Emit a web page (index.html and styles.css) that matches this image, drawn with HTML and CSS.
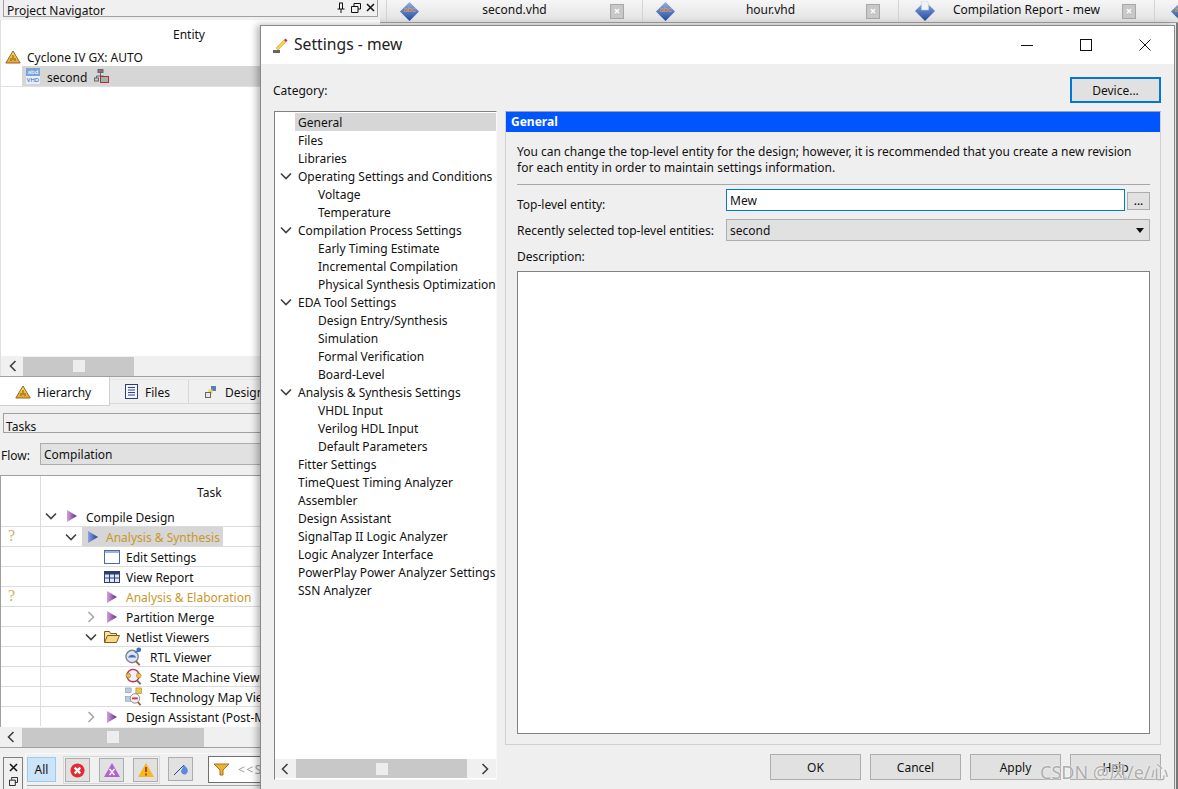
FILE: index.html
```html
<!DOCTYPE html>
<html lang="en">
<head>
    <meta charset="UTF-8">
    <title>Settings - mew</title>
    <link rel="stylesheet" href="styles.css">
</head>
<body>
    <svg class="defs" width="0" height="0">
        <defs>
            <linearGradient id="purple" x1="0" y1="0" x2="1" y2="0"><stop offset="0" stop-color="#d8a0e0"/><stop offset="1" stop-color="#5a2a88"/></linearGradient>
            <linearGradient id="blue" x1="0" y1="0" x2="1" y2="0"><stop offset="0" stop-color="#8aa4e4"/><stop offset="1" stop-color="#27378f"/></linearGradient>
            <linearGradient id="gem" x1="0" y1="0" x2="0" y2="1"><stop offset="0" stop-color="#8fb0ea"/><stop offset="1" stop-color="#24499c"/></linearGradient>
            <linearGradient id="amber" x1="0" y1="0" x2="0" y2="1"><stop offset="0" stop-color="#ffe070"/><stop offset="1" stop-color="#eea020"/></linearGradient>
            <symbol id="warn" viewBox="0 0 16 14"><path d="M8 1 L15.200 13 H.8 Z" fill="url(#amber)" stroke="#8a6a30"/><path d="M8 5v5M6 8v3M10 8v3" stroke="#7a5a10"/></symbol>
            <symbol id="play-purple" viewBox="0 0 12 12"><path d="M1 0 L11 6 L1 12 Z" fill="url(#purple)"/></symbol>
            <symbol id="play-blue" viewBox="0 0 12 12"><path d="M1 0 L11 6 L1 12 Z" fill="url(#blue)"/></symbol>
            <symbol id="gem-abc" viewBox="0 0 20 20"><path d="M10 0 L20 10 L10 20 L0 10 Z" fill="url(#gem)"/><text x="10" y="11" font-size="8" text-anchor="middle" fill="#e8a030" font-family="Liberation Sans">abc</text></symbol>
            <symbol id="gem-doc" viewBox="0 0 22 22"><path d="M11 0 L22 11 L11 22 L0 11 Z" fill="url(#gem)"/><path d="M7 0h6l2 3v7H7Z" fill="#eef2fa" stroke="#b8c4dc" stroke-width=".5"/></symbol>
            <symbol id="down" viewBox="0 0 12 8"><path d="M1 1.500 L6 6.500 L11 1.500" fill="none" stroke="#404040" stroke-width="1.600"/></symbol>
            <symbol id="right" viewBox="0 0 8 12"><path d="M1.500 1 L6.500 6 L1.500 11" fill="none" stroke="#a8a8a8" stroke-width="1.600"/></symbol>
            <symbol id="left" viewBox="0 0 8 12"><path d="M6.500 1 L1.500 6 L6.500 11" fill="none" stroke="#404040" stroke-width="1.600"/></symbol>
        </defs>
    </svg>

    <div class="app">
        <aside class="left">
            <div class="dock-title">
                <span>Project Navigator</span>
                <span class="dock-btns">
                    <svg width="10" height="12" viewBox="0 0 10 12"><path d="M3 1h4M3.500 1v6M6.500 1v6M1.500 7h7M5 7v4" fill="none" stroke="#111"/></svg>
                    <svg width="10" height="10" viewBox="0 0 10 10"><path d="M3 3V.5h6.500V6H7M.5 3.500H7V9.500H.5Z" fill="none" stroke="#111"/></svg>
                    <svg width="9" height="9" viewBox="0 0 9 9"><path d="M1 1l7 7M8 1L1 8" stroke="#111" stroke-width="1.500"/></svg>
                </span>
            </div>
            <div class="nav-panel">
                <div class="nav-head">Entity</div>
                <div class="nav-device"><svg class="ico16"><use href="#warn"/></svg><span>Cyclone IV GX: AUTO</span></div>
                <div class="nav-second">
                    <span class="abc"><b>abd</b><b>VHD</b></span>
                    <span class="second-name">second</span>
                    <svg width="15" height="14" viewBox="0 0 15 14"><rect x="4" y="0.500" width="5" height="3" fill="#8a6a90" stroke="#666"/><path d="M6.500 4v3M2.500 9V7h7" fill="none" stroke="#666"/><rect x="0.500" y="9" width="4" height="3" fill="#ccc" stroke="#666"/><rect x="6.500" y="7.500" width="8" height="6" fill="#8fbf9f" stroke="#c02050"/></svg>
                </div>
                <div class="grow"></div>
                <div class="hscroll">
                    <svg class="arrow" width="8" height="12"><use href="#left"/></svg>
                    <div class="htrack nav-track"><i></i></div>
                </div>
            </div>
            <div class="nav-tabs">
                <div class="tab-active"><svg class="ico16"><use href="#warn"/></svg>Hierarchy</div>
                <div class="tab"><svg width="13" height="15" viewBox="0 0 13 15"><rect x="0.500" y="0.500" width="12" height="14" fill="#f4f6fb" stroke="#2c3f7c"/><path d="M3 3.500h7M3 6h7M3 8.500h7M3 11h7" stroke="#2c3f9c"/></svg><span class="tab-text">Files</span></div>
                <div class="tab tab-design"><svg width="12" height="12" viewBox="0 0 12 12"><rect x="6" y="0" width="5" height="5" fill="#5a7fb0"/><rect x="3.500" y="3.500" width="4" height="4" fill="#f0d050"/><rect x="0.500" y="6.500" width="5" height="5" fill="#e8e8e8" stroke="#666"/></svg><span class="tab-text">Design</span></div>
            </div>
            <div class="tasks-title">Tasks</div>
            <div class="flow-row">
                <span class="flow-label">Flow:</span>
                <div class="flow-select">Compilation</div>
            </div>
            <div class="task-table">
                <div class="task-head"><div class="col-a"></div><div class="col-b">Task</div></div>
                <div class="task-row no-line">
                    <div class="col-a"></div>
                    <div class="col-b lv1"><svg class="chev"><use href="#down"/></svg><svg class="play"><use href="#play-purple"/></svg><span class="cell">Compile Design</span></div>
                </div>
                <div class="task-row">
                    <div class="col-a q">?</div>
                    <div class="col-b lv2"><svg class="chev"><use href="#down"/></svg><span class="sel"><svg class="play"><use href="#play-blue"/></svg><span class="amber cell">Analysis &amp; Synthesis</span></span></div>
                </div>
                <div class="task-row">
                    <div class="col-a"></div>
                    <div class="col-b lv3"><svg width="16" height="14" viewBox="0 0 16 14"><rect x="0.500" y="0.500" width="15" height="13" fill="#fff" stroke="#4a6aa8"/><rect x="1" y="1" width="14" height="2" fill="#9ab4dc"/></svg><span class="cell">Edit Settings</span></div>
                </div>
                <div class="task-row">
                    <div class="col-a"></div>
                    <div class="col-b lv3"><svg width="16" height="12" viewBox="0 0 16 12"><rect x="0.500" y="0.500" width="15" height="11" fill="#dfe6f2" stroke="#2c3f6c"/><rect x="0" y="0" width="16" height="3.500" fill="#2c3f6c"/><path d="M0 7h16M5.500 3v9M10.500 3v9" stroke="#2c3f6c"/></svg><span class="cell">View Report</span></div>
                </div>
                <div class="task-row">
                    <div class="col-a q">?</div>
                    <div class="col-b lv3b"><svg class="play"><use href="#play-purple"/></svg><span class="amber cell">Analysis &amp; Elaboration</span></div>
                </div>
                <div class="task-row">
                    <div class="col-a"></div>
                    <div class="col-b lv2b"><svg class="chev-r"><use href="#right"/></svg><svg class="play"><use href="#play-purple"/></svg><span class="cell">Partition Merge</span></div>
                </div>
                <div class="task-row">
                    <div class="col-a"></div>
                    <div class="col-b lv2c"><svg class="chev"><use href="#down"/></svg><svg width="16" height="13" viewBox="0 0 16 13"><path d="M.5 12.500V1.500h5l1 2h6v2" fill="#f5e4a8" stroke="#7a5a20"/><path d="M.5 12.500l3-7h12l-3 7Z" fill="#f9d880" stroke="#7a5a20"/></svg><span class="cell">Netlist Viewers</span></div>
                </div>
                <div class="task-row">
                    <div class="col-a"></div>
                    <div class="col-b lv4"><svg class="ico20" viewBox="0 0 20 20"><circle cx="8" cy="10" r="6.500" fill="#dfe6f2" stroke="#7a8494" stroke-width="1.500"/><path d="M3.500 11a5 5 0 0 1 9 0Z" fill="#3f6fc0"/><circle cx="15" cy="3" r="2.500" fill="#3f6fc0"/><path d="M11 6l3-2" stroke="#3f6fc0" stroke-width="1.500"/><path d="M12 15l4 4" stroke="#8a6a40" stroke-width="2"/></svg><span class="cell">RTL Viewer</span></div>
                </div>
                <div class="task-row">
                    <div class="col-a"></div>
                    <div class="col-b lv4"><svg class="ico20" viewBox="0 0 20 20"><circle cx="9" cy="9" r="6.500" fill="#eef1f6" stroke="#c83048" stroke-width="1.500"/><circle cx="4" cy="9" r="2.500" fill="#e8c040" stroke="#806020" stroke-width=".5"/><circle cx="15" cy="9" r="2.500" fill="#e8c040" stroke="#806020" stroke-width=".5"/><path d="M13 14l4 4" stroke="#6a6a70" stroke-width="2"/></svg><span class="cell">State Machine Viewer</span></div>
                </div>
                <div class="task-row">
                    <div class="col-a"></div>
                    <div class="col-b lv4"><svg class="ico20" viewBox="0 0 20 20"><rect x="1" y="1" width="6" height="5" fill="#b8cce8" stroke="#7a8494" stroke-width=".5"/><rect x="12" y="1" width="6" height="6" fill="#f0c840" stroke="#8a6a20" stroke-width=".5"/><rect x="1" y="10" width="6" height="5" fill="#b8cce8" stroke="#7a8494" stroke-width=".5"/><circle cx="11" cy="12" r="5" fill="#f4f4f6" stroke="#8a8a90"/><path d="M8 12h6" stroke="#d03040" stroke-width="2"/><path d="M14 16l3 3" stroke="#8a6a40" stroke-width="2"/></svg><span class="cell">Technology Map Viewer</span></div>
                </div>
                <div class="task-row">
                    <div class="col-a"></div>
                    <div class="col-b lv2b"><svg class="chev-r"><use href="#right"/></svg><svg class="play"><use href="#play-purple"/></svg><span class="cell">Design Assistant (Post-Map)</span></div>
                </div>
            </div>
            <div class="hscroll task-scroll">
                <svg class="arrow" width="8" height="12"><use href="#left"/></svg>
                <div class="htrack task-track"><i></i></div>
            </div>
            <div class="msg-bar">
                <div class="msg-close">
                    <svg width="9" height="9" viewBox="0 0 9 9"><path d="M1 1l7 7M8 1L1 8" stroke="#111" stroke-width="1.500"/></svg>
                    <svg width="9" height="9" viewBox="0 0 10 10"><path d="M3 3V.5h6.500V6H7M.5 3.500H7V9.500H.5Z" fill="none" stroke="#111"/></svg>
                </div>
                <div class="msg-panel">
                    <div class="msg-tools">
                        <div class="all-btn">All</div>
                        <div class="tool-group">
                            <div class="tool"><svg width="15" height="15" viewBox="0 0 16 16"><circle cx="8" cy="8" r="7.500" fill="#e82830"/><path d="M5 5l6 6M11 5l-6 6" stroke="#fff" stroke-width="2.500"/></svg></div>
                            <div class="tool"><svg width="16" height="14" viewBox="0 0 16 14"><path d="M8 0 L16 14 H0 Z" fill="#b060d0"/><path d="M5.500 6l5 6M10.500 6l-5 6" stroke="#fff" stroke-width="1.500"/></svg></div>
                            <div class="tool"><svg width="16" height="14" viewBox="0 0 16 14"><path d="M8 0 L16 14 H0 Z" fill="#f5b820"/><path d="M8 4v5M8 10.500v2" stroke="#a02020" stroke-width="1.500"/></svg></div>
                        </div>
                        <div class="tool"><svg width="16" height="14" viewBox="0 0 16 14"><path d="M1 13L11 3" stroke="#304870"/><path d="M11 3c3 3 5 5 3 8s-6 1-6-2z" fill="#5a8ae0"/></svg></div>
                        <div class="filter">
                            <svg width="15" height="13" viewBox="0 0 15 13"><path d="M0 1h15L9 7v5H6V7Z" fill="#f0b030" stroke="#a87020"/></svg>
                            <span>&lt;&lt;Search&gt;&gt;</span>
                        </div>
                    </div>
                </div>
            </div>
        </aside>
        <main class="right">
            <div class="doc-tabs">
                <div class="doc-gap"></div>
                <div class="doc-tab"><svg class="gem"><use href="#gem-abc"/></svg><span>second.vhd</span><i class="tab-x">×</i></div>
                <div class="doc-tab"><svg class="gem"><use href="#gem-abc"/></svg><span>hour.vhd</span><i class="tab-x">×</i></div>
                <div class="doc-tab doc-report"><svg class="gem-big"><use href="#gem-doc"/></svg><span>Compilation Report - mew</span><i class="tab-x">×</i></div>
                <div class="doc-last"><svg class="gem"><use href="#gem-abc"/></svg></div>
            </div>
            <div class="doc-edge"></div>
        </main>
    </div>

    <div class="dialog">
        <header class="dlg-title">
            <svg width="16" height="17" viewBox="0 0 16 17"><path d="M4 11L12 3l2 2-8 8z" fill="#f5d040" stroke="#c89a30" stroke-width=".5"/><path d="M12 3l1.500-1.500 2 2L14 5z" fill="#d02060"/><rect x="1" y="13" width="7" height="3" fill="#666"/></svg>
            <span class="dlg-name">Settings - mew</span>
            <div class="win-btns">
                <svg width="12" height="12" viewBox="0 0 12 12"><path d="M0 6.500h12" stroke="#111"/></svg>
                <svg width="12" height="12" viewBox="0 0 12 12"><rect x="0.500" y="0.500" width="11" height="11" fill="none" stroke="#111"/></svg>
                <svg width="12" height="12" viewBox="0 0 12 12"><path d="M.5.500l11 11M11.500.500l-11 11" stroke="#111"/></svg>
            </div>
        </header>
        <div class="dlg-body">
            <div class="cat-row">
                <span class="cat-label">Category:</span>
                <button class="btn btn-device">Device...</button>
            </div>
            <div class="dlg-main">
                <div class="tree">
                    <div class="tree-list">
                        <div class="t t0 sel-row">General</div>
                        <div class="t t0">Files</div>
                        <div class="t t0">Libraries</div>
                        <div class="t t0"><svg class="tree-chev"><use href="#down"/></svg>Operating Settings and Conditions</div>
                        <div class="t t1">Voltage</div>
                        <div class="t t1">Temperature</div>
                        <div class="t t0"><svg class="tree-chev"><use href="#down"/></svg>Compilation Process Settings</div>
                        <div class="t t1">Early Timing Estimate</div>
                        <div class="t t1">Incremental Compilation</div>
                        <div class="t t1">Physical Synthesis Optimization</div>
                        <div class="t t0"><svg class="tree-chev"><use href="#down"/></svg>EDA Tool Settings</div>
                        <div class="t t1">Design Entry/Synthesis</div>
                        <div class="t t1">Simulation</div>
                        <div class="t t1">Formal Verification</div>
                        <div class="t t1">Board-Level</div>
                        <div class="t t0"><svg class="tree-chev"><use href="#down"/></svg>Analysis &amp; Synthesis Settings</div>
                        <div class="t t1">VHDL Input</div>
                        <div class="t t1">Verilog HDL Input</div>
                        <div class="t t1">Default Parameters</div>
                        <div class="t t0">Fitter Settings</div>
                        <div class="t t0">TimeQuest Timing Analyzer</div>
                        <div class="t t0">Assembler</div>
                        <div class="t t0">Design Assistant</div>
                        <div class="t t0">SignalTap II Logic Analyzer</div>
                        <div class="t t0">Logic Analyzer Interface</div>
                        <div class="t t0">PowerPlay Power Analyzer Settings</div>
                        <div class="t t0">SSN Analyzer</div>
                    </div>
                    <div class="tree-scroll">
                        <svg class="arrow" width="8" height="12"><use href="#left"/></svg>
                        <div class="htrack tree-track"><i></i></div>
                        <svg class="arrow" width="8" height="12"><path d="M1.500 1L6.500 6L1.500 11" fill="none" stroke="#404040" stroke-width="1.600"/></svg>
                    </div>
                </div>
                <div class="page-col">
                    <section class="page">
                        <h2 class="page-title">General</h2>
                        <div class="page-body">
                            <p class="intro">You can change the top-level entity for the design; however, it is recommended that you create a new revision for each entity in order to maintain settings information.</p>
                            <div class="form-row top-row">
                                <label>Top-level entity:</label>
                                <div class="input-wrap">
                                    <div class="input">Mew</div>
                                    <button class="dots">...</button>
                                </div>
                            </div>
                            <div class="form-row">
                                <label>Recently selected top-level entities:</label>
                                <div class="combo"><span>second</span><svg width="8" height="5" viewBox="0 0 8 5"><path d="M0 0h8L4 5z" fill="#111"/></svg></div>
                            </div>
                            <div class="desc-label">Description:</div>
                            <div class="desc-box"></div>
                        </div>
                    </section>
                    <footer class="dlg-foot">
                        <button class="btn">OK</button>
                        <button class="btn">Cancel</button>
                        <button class="btn">Apply</button>
                        <button class="btn">Help</button>
                    </footer>
                </div>
            </div>
        </div>
        <span class="watermark">CSDN @风/e/心</span>
    </div>
</body>
</html>
```

FILE: styles.css
```css
* {
    box-sizing: border-box;
}
html, body {
    margin: 0;
    padding: 0;
    height: 789px;
    overflow: hidden;
    background: #f0f0f0;
    font-family: "Noto Sans", "Noto Sans CJK SC", sans-serif;
    font-size: 12px;
    color: #111;
}
.defs {
    position: absolute;
}
.app {
    display: flex;
    height: 789px;
}

/* left docks */
.left {
    width: 380px;
    flex: none;
    display: flex;
    flex-direction: column;
    overflow: hidden;
}
.dock-title {
    height: 17px;
    width: 375px;
    margin-left: 3px;
    border: 1px solid #a0a0a0;
    border-top: none;
    display: flex;
    justify-content: space-between;
    align-items: center;
    padding: 6px 0 0 3px;
    line-height: 16px;
}
.dock-btns {
    display: flex;
    gap: 5px;
    align-items: center;
    padding-right: 2px;
    margin-top: -7px;
}
.nav-panel {
    height: 356px;
    margin-top: 3px;
    background: #fff;
    display: flex;
    flex-direction: column;
    border-left: 1px solid #e0e0e0;
}
.nav-head {
    height: 26px;
    line-height: 30px;
    padding-left: 172px;
}
.nav-device {
    height: 20px;
    display: flex;
    align-items: center;
    gap: 6px;
    padding: 2px 0 0 4px;
}
.ico16 {
    width: 16px;
    height: 14px;
}
.nav-second {
    height: 21px;
    background: #d6d6d6;
    display: flex;
    align-items: center;
    border-bottom: 1px solid #e0e0e0;
    padding-left: 25px;
    gap: 7px;
    position: relative;
}
.nav-second::before {
    content: '';
    position: absolute;
    left: 0;
    top: 0;
    bottom: 0;
    width: 21px;
    background: #fff;
}
.abc {
    width: 14px;
    height: 16px;
    display: flex;
    flex-direction: column;
    position: relative;
    font-size: 6px;
    line-height: 8px;
    text-align: center;
    overflow: hidden;
}
.abc b {
    display: block;
    height: 8px;
    font-weight: normal;
}
.abc b:first-child {
    background: #7da4d6;
    color: #fff;
}
.abc b:last-child {
    background: #e8eef8;
    color: #2c5fb0;
}
.second-name {
    padding-top: 3px;
}
.grow {
    flex: 1;
}
.hscroll {
    height: 20px;
    flex: none;
    display: flex;
    align-items: center;
    padding-left: 8px;
    background: #f0f0f0;
    gap: 6px;
}
.arrow {
    flex: none;
}
.htrack {
    height: 19px;
    background: #c8c8c8;
    display: flex;
    align-items: center;
    justify-content: center;
}
.htrack i {
    width: 12px;
    height: 12px;
    background: #ededed;
}
.nav-track {
    width: 111px;
}
.nav-tabs {
    height: 30px;
    flex: none;
    display: flex;
    align-items: flex-start;
    border-top: 1px solid #a0a0a0;
}
.tab-active, .tab {
    display: flex;
    align-items: center;
}
.tab-active {
    width: 110px;
    height: 29px;
    padding: 2px 0 0 15px;
    gap: 6px;
    background: #fff;
    border-bottom: 1px solid #d0d0d0;
    border-right: 1px solid #d0d0d0;
}
.tab {
    height: 25px;
    margin-top: 2px;
    padding-left: 15px;
    width: 79px;
    border-right: 1px solid #d8d8d8;
    border-bottom: 1px solid #d8d8d8;
    border-top: 1px solid #e4e4e4;
    gap: 7px;
}
.tab-text {
    padding-top: 2px;
}
.tab-design {
    padding-left: 16px;
    gap: 8px;
    width: 120px;
}
.tasks-title {
    height: 20px;
    flex: none;
    margin: 7px 0 0 3px;
    border: 1px solid #a0a0a0;
    border-right: none;
    padding: 6px 0 0 2px;
    line-height: 14px;
}
.flow-row {
    display: flex;
    align-items: center;
    height: 22px;
    flex: none;
    margin-top: 10px;
}
.flow-label {
    width: 40px;
    padding: 2px 0 0 1px;
}
.flow-select {
    width: 300px;
    height: 22px;
    background: #e1e1e1;
    border: 1px solid #adadad;
    line-height: 22px;
    padding-left: 3px;
}
.task-table {
    margin-top: 10px;
    border-top: 1px solid #a0a0a0;
    border-left: 1px solid #a0a0a0;
    background: #fff;
    height: 252px;
    flex: none;
    overflow: hidden;
}
.task-head {
    display: flex;
    height: 30px;
}
.task-head .col-b {
    padding: 8px 0 0 156px;
    line-height: 17px;
    align-items: flex-start;
}
.task-row {
    display: flex;
    height: 20px;
    border-top: 1px solid #dcdcdc;
    white-space: nowrap;
}
.task-row.no-line {
    border-top: none;
}
.col-a {
    width: 40px;
    flex: none;
    border-right: 1px solid #dcdcdc;
}
.col-b {
    flex: 1;
    display: flex;
    align-items: center;
    gap: 6px;
}
.cell {
    padding-top: 2px;
}
.q {
    color: #d0b060;
    font-size: 16px;
    font-family: "Liberation Serif", serif;
    padding-left: 7px;
    line-height: 18px;
}
.chev {
    width: 12px;
    height: 8px;
    flex: none;
}
.chev-r {
    width: 8px;
    height: 12px;
    flex: none;
}
.play {
    width: 12px;
    height: 12px;
    flex: none;
}
.lv1 { padding-left: 4px; gap: 8.5px; }
.lv2 { padding-left: 24px; gap: 5px; }
.lv2b { padding-left: 46px; gap: 8px; }
.lv2b .chev-r { margin-right: 3px; }
.lv2c { padding-left: 44px; gap: 6px; }
.lv2c .chev { margin-right: 1px; }
.lv3 { padding-left: 63px; gap: 6px; }
.lv3b { padding-left: 65px; gap: 8px; }
.lv4 { padding-left: 83px; gap: 6px; }
.ico20 {
    width: 20px;
    height: 19px;
    flex: none;
}
.sel {
    display: flex;
    align-items: center;
    gap: 7px;
    background: #d6d6d6;
    height: 19px;
    padding: 0 3px 0 5px;
}
.amber {
    color: #c9982a;
}
.task-scroll {
    padding-left: 7px;
    gap: 7px;
}
.task-track {
    width: 182px;
}
.msg-bar {
    height: 41px;
    flex: none;
    display: flex;
    border-top: 1px solid #a0a0a0;
    padding-left: 3px;
    gap: 2px;
}
.msg-close {
    width: 20px;
    height: 40px;
    margin-top: 9px;
    border: 1px solid #808080;
    display: flex;
    flex-direction: column;
    align-items: center;
    gap: 5px;
    padding-top: 5px;
    flex: none;
}
.msg-panel {
    flex: 1;
    margin-top: 5px;
    border-top: 1px solid #fafafa;
    border-left: 1px solid #fafafa;
    padding: 3px 0 0 1px;
}
.msg-tools {
    display: flex;
    align-items: flex-start;
    height: 29px;
    border-bottom: 1px solid #a8a8a8;
}
.all-btn {
    width: 29px;
    height: 25px;
    background: #cce4f7;
    border: 1px solid #9ccbef;
    text-align: center;
    line-height: 24px;
    margin-right: 7px;
}
.tool-group {
    display: flex;
    gap: 9px;
    border: 1px solid #d8d8d8;
    padding: 1px;
    margin: -1px 8px 0 0;
}
.tool {
    width: 25px;
    height: 24px;
    flex: none;
    background: #e1e1e1;
    border: 1px solid #adadad;
    display: flex;
    align-items: center;
    justify-content: center;
}
.filter {
    width: 200px;
    height: 27px;
    flex: none;
    border: 1px solid #707070;
    background: #fff;
    margin: -1px 0 0 15px;
    display: flex;
    align-items: center;
    gap: 9px;
    padding-left: 5px;
    color: #a0a0a0;
    letter-spacing: 1.500px;
}

/* document tabs */
.right {
    flex: 1;
    overflow: hidden;
    display: flex;
    flex-direction: column;
}
.doc-tabs {
    display: flex;
    height: 23px;
    flex: none;
    border-bottom: 1px solid #a0a0a0;
    background: linear-gradient(#f6f6f6, #e2e2e2);
    overflow: hidden;
}
.doc-gap {
    width: 7px;
    flex: none;
    border-right: 1px solid #d4d4d4;
}
.doc-tab {
    width: 256px;
    flex: none;
    display: grid;
    grid-template-columns: 1fr auto 1fr;
    align-items: center;
    border-right: 1px solid #d4d4d4;
    line-height: 20px;
}
.doc-tab span {
    margin-top: -2px;
}
.gem {
    width: 21px;
    height: 19px;
    margin-left: 12px;
    flex: none;
}
.gem-big {
    width: 22px;
    height: 20px;
    margin-left: 15px;
}
.doc-last {
    padding: 0 0 0 3px;
    display: flex;
    align-items: center;
}
.tab-x {
    justify-self: end;
    margin-right: 18px;
    width: 14px;
    height: 15px;
    background: #c8c8c8;
    border: 1px solid #a8a8a8;
    color: #fff;
    font-style: normal;
    font-weight: bold;
    font-size: 11px;
    line-height: 12px;
    text-align: center;
}
.doc-edge {
    flex: 1;
    width: 2px;
    margin-left: auto;
    background: #7a7a7a;
}

/* settings dialog, floats over the app */
.dialog {
    position: absolute;
    left: 260px;
    top: 25px;
    width: 915px;
    height: 780px;
    background: #efefef;
    border: 1px solid #8a8a8a;
    box-shadow: -3px 0 7px rgba(0, 0, 0, 0.3);
}
.dlg-title {
    height: 38px;
    background: #fff;
    display: flex;
    align-items: center;
    padding-left: 11px;
    gap: 6px;
    font-size: 15.700px;
}
.dlg-name {
    flex: 1;
    color: #222;
    margin-top: -2px;
}
.win-btns {
    display: flex;
    gap: 47px;
    padding-right: 23px;
    margin-top: -1px;
}
.dlg-body {
    padding: 13px 13px 0 13px;
}
.cat-row {
    display: flex;
    justify-content: space-between;
    height: 25px;
}
.cat-label {
    margin-left: -1px;
    padding-top: 5px;
}
.btn {
    width: 91px;
    height: 26px;
    background: #e1e1e1;
    border: 1px solid #adadad;
    font: inherit;
    color: #111;
    padding: 0;
}
.btn-device {
    border: 2px solid #0078d7;
}
.dlg-main {
    display: flex;
    gap: 8px;
    margin-top: 9px;
    height: 669px;
}
.tree {
    width: 223px;
    flex: none;
    border: 1px solid #828282;
    border-right-color: #f8f8f8;
    border-bottom-color: #f8f8f8;
    background: #fff;
    padding-top: 1px;
    display: flex;
    flex-direction: column;
    overflow: hidden;
}
.tree-list {
    flex: 1;
    white-space: nowrap;
    overflow: hidden;
}
.t {
    height: 18px;
    line-height: 20px;
    position: relative;
}
.t0 {
    margin-left: 20px;
    padding-left: 3px;
}
.t1 {
    padding-left: 43px;
}
.sel-row {
    background: #d6d6d6;
}
.tree-chev {
    position: absolute;
    left: -15px;
    top: 5px;
    width: 12px;
    height: 8px;
}
.tree-scroll {
    height: 19px;
    flex: none;
    margin-bottom: 1px;
    display: flex;
    align-items: center;
    background: #f0f0f0;
    padding-left: 6px;
    gap: 7px;
}
.tree-track {
    width: 171px;
    margin-right: 7px;
}
.page-col {
    flex: 1;
    display: flex;
    flex-direction: column;
}
.page {
    height: 634px;
    flex: none;
    display: flex;
    flex-direction: column;
    border: 1px solid #d0d0d0;
    border-top-color: #a0a0a0;
}
.page-title {
    margin: 0;
    height: 20px;
    background: #0055ff;
    color: #fff;
    font-size: 12px;
    font-weight: bold;
    line-height: 20px;
    padding-left: 5px;
}
.page-body {
    flex: 1;
    padding: 12px 10px 10px 11px;
    display: flex;
    flex-direction: column;
}
.intro {
    margin: 0;
    line-height: 16px;
    padding-bottom: 8px;
    border-bottom: 1px solid #a8a8a8;
}
.form-row {
    display: flex;
    align-items: center;
    justify-content: space-between;
    height: 22px;
    margin-top: 8px;
}
.top-row {
    margin-top: 4px;
}
.top-row label {
    padding-top: 8px;
}
.input-wrap {
    width: 424px;
    display: flex;
    gap: 2px;
}
.input {
    flex: 1;
    height: 22px;
    border: 1px solid #0078d7;
    background: #fff;
    line-height: 21px;
    padding-left: 3px;
}
.dots {
    width: 23px;
    height: 18px;
    margin-top: 3px;
    background: #e1e1e1;
    border: 1px solid #adadad;
    font: inherit;
    line-height: 12px;
    padding: 0;
}
.combo {
    width: 424px;
    height: 22px;
    background: #e1e1e1;
    border: 1px solid #adadad;
    padding: 0 5px 0 3px;
    display: flex;
    align-items: center;
    justify-content: space-between;
}
.desc-label {
    margin-top: 7px;
    line-height: 17px;
}
.desc-box {
    flex: 1;
    margin-top: 6px;
    border: 1px solid #828282;
    background: #fff;
}
.dlg-foot {
    display: flex;
    justify-content: flex-end;
    gap: 9px;
    margin-top: 9px;
}
.watermark {
    position: absolute;
    left: 779px;
    top: 732px;
    font-size: 18px;
    white-space: nowrap;
    color: #aeaeae;
    text-shadow: 0 0 2px #fff;
}
```
